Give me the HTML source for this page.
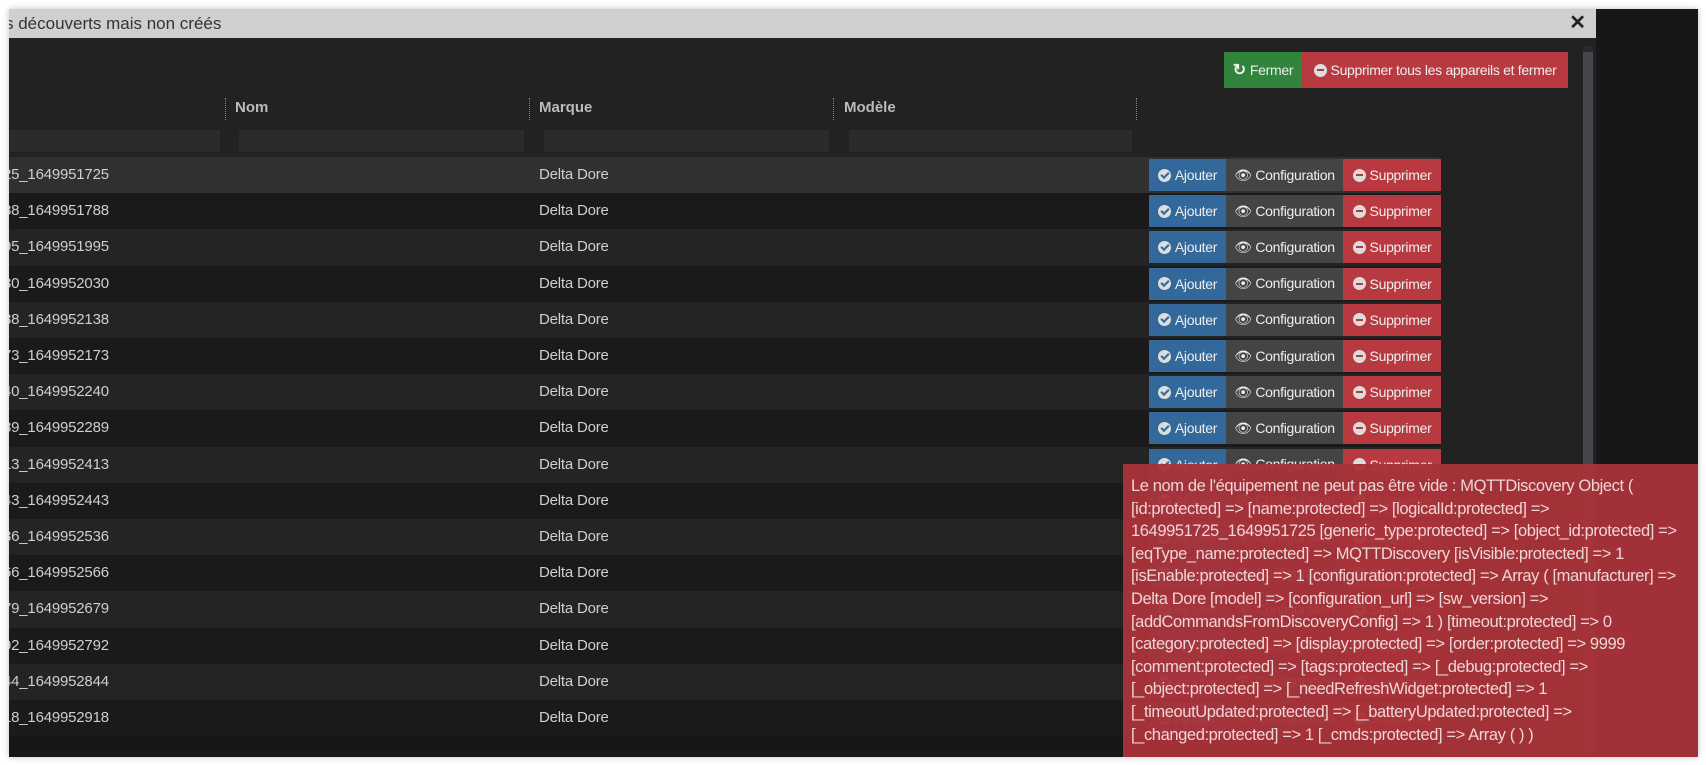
<!DOCTYPE html>
<html><head><meta charset="utf-8"><style>
*{margin:0;padding:0;box-sizing:border-box}
body{width:1706px;height:765px;background:#fff;position:relative;overflow:hidden;font-family:"Liberation Sans",sans-serif}
.frame{position:absolute;left:9px;top:9px;width:1689px;height:748px;background:#161719;box-shadow:0 0 6px rgba(0,0,0,.25);overflow:hidden}
.modal{position:absolute;left:0;top:0;width:1587px;height:748px;background:#222;overflow:hidden}
.title{position:absolute;left:0;top:0;width:1587px;height:29px;background:#cfcfcf;color:#333;font-size:17px;line-height:29px;padding-left:0}
.title span{position:absolute;left:-4px}
.x{position:absolute;right:10px;top:0;font-weight:bold;font-size:20px;color:#222}
.btn{position:absolute;color:#eee;font-size:14px;letter-spacing:-.3px;display:flex;align-items:center;justify-content:center;gap:4px;white-space:nowrap}
.hd{position:absolute;top:90px;color:#bbb;font-weight:bold;font-size:15px}
.sep{position:absolute;top:89px;height:22px;border-left:1px dotted #888}
.in{position:absolute;top:121px;height:22px;background:#2b2b2b}
.row{position:absolute;left:0;width:1430px;height:36.2px;color:#cfcfcf;font-size:15px;letter-spacing:-.2px}
.row .id{position:absolute;left:-6px;top:9px}
.row .m{position:absolute;left:530px;top:9px}
.rb{position:absolute;top:2px;height:32px;display:flex;align-items:center;justify-content:center;gap:4px;color:#eee;font-size:14px;letter-spacing:-.3px}
.a{left:1140px;width:77px;background:#33699a}
.c{left:1217px;width:117px;background:#434446}
.s{left:1334px;width:98px;background:#b83a40}
.ic{width:13px;height:13px;border-radius:50%;background:#ddd;display:inline-block;position:relative}
.ic.min::after{content:"";position:absolute;left:3px;top:5.5px;width:7px;height:2px;background:#b83a40}
.ic.ok::after{content:"";position:absolute;left:3px;top:3px;width:6px;height:3px;border-left:2px solid #33699a;border-bottom:2px solid #33699a;transform:rotate(-45deg)}
.alert{position:absolute;left:1114px;top:455px;width:575px;height:293px;background:rgba(168,50,57,.96);color:#eed6d6;font-size:16.5px;letter-spacing:-.4px;line-height:22.6px;padding:11px 0 0 8px;white-space:nowrap}
</style></head><body>
<div class="frame">
<div class="modal">
<div class="title"><span>s découverts mais non créés</span><div class="x">✕</div></div>
<div class="btn" style="left:1215px;top:43px;width:78px;height:36px;background:#30843b"><span style="font-weight:bold;font-size:16px">↻</span>Fermer</div>
<div class="btn" style="left:1293px;top:43px;width:266px;height:36px;background:#b83a40"><i class="ic min"></i>Supprimer tous les appareils et fermer</div>
<div class="sep" style="left:216px"></div><div class="hd" style="left:226px">Nom</div>
<div class="sep" style="left:520px"></div><div class="hd" style="left:530px">Marque</div>
<div class="sep" style="left:824px"></div><div class="hd" style="left:835px">Modèle</div>
<div class="sep" style="left:1127px"></div>
<div class="in" style="left:0;width:211px"></div>
<div class="in" style="left:230px;width:285px"></div>
<div class="in" style="left:535px;width:285px"></div>
<div class="in" style="left:840px;width:283px"></div>

<div class="row" style="top:148px;background:#303030"><span class="id">25_1649951725</span><span class="m">Delta Dore</span><div class="rb a"><i class="ic ok"></i>Ajouter</div><div class="rb c">👁 Configuration</div><div class="rb s"><i class="ic min"></i>Supprimer</div></div>
<div class="row" style="top:184.2px;background:#1a1a1a"><span class="id">88_1649951788</span><span class="m">Delta Dore</span><div class="rb a"><i class="ic ok"></i>Ajouter</div><div class="rb c">👁 Configuration</div><div class="rb s"><i class="ic min"></i>Supprimer</div></div>
<div class="row" style="top:220.4px;background:#242424"><span class="id">95_1649951995</span><span class="m">Delta Dore</span><div class="rb a"><i class="ic ok"></i>Ajouter</div><div class="rb c">👁 Configuration</div><div class="rb s"><i class="ic min"></i>Supprimer</div></div>
<div class="row" style="top:256.6px;background:#1a1a1a"><span class="id">30_1649952030</span><span class="m">Delta Dore</span><div class="rb a"><i class="ic ok"></i>Ajouter</div><div class="rb c">👁 Configuration</div><div class="rb s"><i class="ic min"></i>Supprimer</div></div>
<div class="row" style="top:292.8px;background:#242424"><span class="id">38_1649952138</span><span class="m">Delta Dore</span><div class="rb a"><i class="ic ok"></i>Ajouter</div><div class="rb c">👁 Configuration</div><div class="rb s"><i class="ic min"></i>Supprimer</div></div>
<div class="row" style="top:329px;background:#1a1a1a"><span class="id">73_1649952173</span><span class="m">Delta Dore</span><div class="rb a"><i class="ic ok"></i>Ajouter</div><div class="rb c">👁 Configuration</div><div class="rb s"><i class="ic min"></i>Supprimer</div></div>
<div class="row" style="top:365.2px;background:#242424"><span class="id">40_1649952240</span><span class="m">Delta Dore</span><div class="rb a"><i class="ic ok"></i>Ajouter</div><div class="rb c">👁 Configuration</div><div class="rb s"><i class="ic min"></i>Supprimer</div></div>
<div class="row" style="top:401.4px;background:#1a1a1a"><span class="id">89_1649952289</span><span class="m">Delta Dore</span><div class="rb a"><i class="ic ok"></i>Ajouter</div><div class="rb c">👁 Configuration</div><div class="rb s"><i class="ic min"></i>Supprimer</div></div>
<div class="row" style="top:437.6px;background:#242424"><span class="id">13_1649952413</span><span class="m">Delta Dore</span><div class="rb a"><i class="ic ok"></i>Ajouter</div><div class="rb c">👁 Configuration</div><div class="rb s"><i class="ic min"></i>Supprimer</div></div>
<div class="row" style="top:473.8px;background:#1a1a1a"><span class="id">43_1649952443</span><span class="m">Delta Dore</span><div class="rb a"><i class="ic ok"></i>Ajouter</div><div class="rb c">👁 Configuration</div><div class="rb s"><i class="ic min"></i>Supprimer</div></div>
<div class="row" style="top:510px;background:#242424"><span class="id">36_1649952536</span><span class="m">Delta Dore</span><div class="rb a"><i class="ic ok"></i>Ajouter</div><div class="rb c">👁 Configuration</div><div class="rb s"><i class="ic min"></i>Supprimer</div></div>
<div class="row" style="top:546.2px;background:#1a1a1a"><span class="id">66_1649952566</span><span class="m">Delta Dore</span><div class="rb a"><i class="ic ok"></i>Ajouter</div><div class="rb c">👁 Configuration</div><div class="rb s"><i class="ic min"></i>Supprimer</div></div>
<div class="row" style="top:582.4px;background:#242424"><span class="id">79_1649952679</span><span class="m">Delta Dore</span><div class="rb a"><i class="ic ok"></i>Ajouter</div><div class="rb c">👁 Configuration</div><div class="rb s"><i class="ic min"></i>Supprimer</div></div>
<div class="row" style="top:618.6px;background:#1a1a1a"><span class="id">92_1649952792</span><span class="m">Delta Dore</span><div class="rb a"><i class="ic ok"></i>Ajouter</div><div class="rb c">👁 Configuration</div><div class="rb s"><i class="ic min"></i>Supprimer</div></div>
<div class="row" style="top:654.8px;background:#242424"><span class="id">44_1649952844</span><span class="m">Delta Dore</span><div class="rb a"><i class="ic ok"></i>Ajouter</div><div class="rb c">👁 Configuration</div><div class="rb s"><i class="ic min"></i>Supprimer</div></div>
<div class="row" style="top:691px;background:#1a1a1a"><span class="id">18_1649952918</span><span class="m">Delta Dore</span><div class="rb a"><i class="ic ok"></i>Ajouter</div><div class="rb c">👁 Configuration</div><div class="rb s"><i class="ic min"></i>Supprimer</div></div>
<div style="position:absolute;left:0;top:727px;width:1430px;height:21px;background:#171717"></div>

<div style="position:absolute;left:1574px;top:37px;width:10px;height:711px;background:#2a2a2a"></div>
<div style="position:absolute;left:1574px;top:43px;width:10px;height:700px;background:#46474a"></div>
</div>
<div class="alert">Le nom de l'équipement ne peut pas être vide : MQTTDiscovery Object (<br>[id:protected] =&gt; [name:protected] =&gt; [logicalId:protected] =&gt;<br>1649951725_1649951725 [generic_type:protected] =&gt; [object_id:protected] =&gt;<br>[eqType_name:protected] =&gt; MQTTDiscovery [isVisible:protected] =&gt; 1<br>[isEnable:protected] =&gt; 1 [configuration:protected] =&gt; Array ( [manufacturer] =&gt;<br>Delta Dore [model] =&gt; [configuration_url] =&gt; [sw_version] =&gt;<br>[addCommandsFromDiscoveryConfig] =&gt; 1 ) [timeout:protected] =&gt; 0<br>[category:protected] =&gt; [display:protected] =&gt; [order:protected] =&gt; 9999<br>[comment:protected] =&gt; [tags:protected] =&gt; [_debug:protected] =&gt;<br>[_object:protected] =&gt; [_needRefreshWidget:protected] =&gt; 1<br>[_timeoutUpdated:protected] =&gt; [_batteryUpdated:protected] =&gt;<br>[_changed:protected] =&gt; 1 [_cmds:protected] =&gt; Array ( ) )</div>
</div>
</body></html>
